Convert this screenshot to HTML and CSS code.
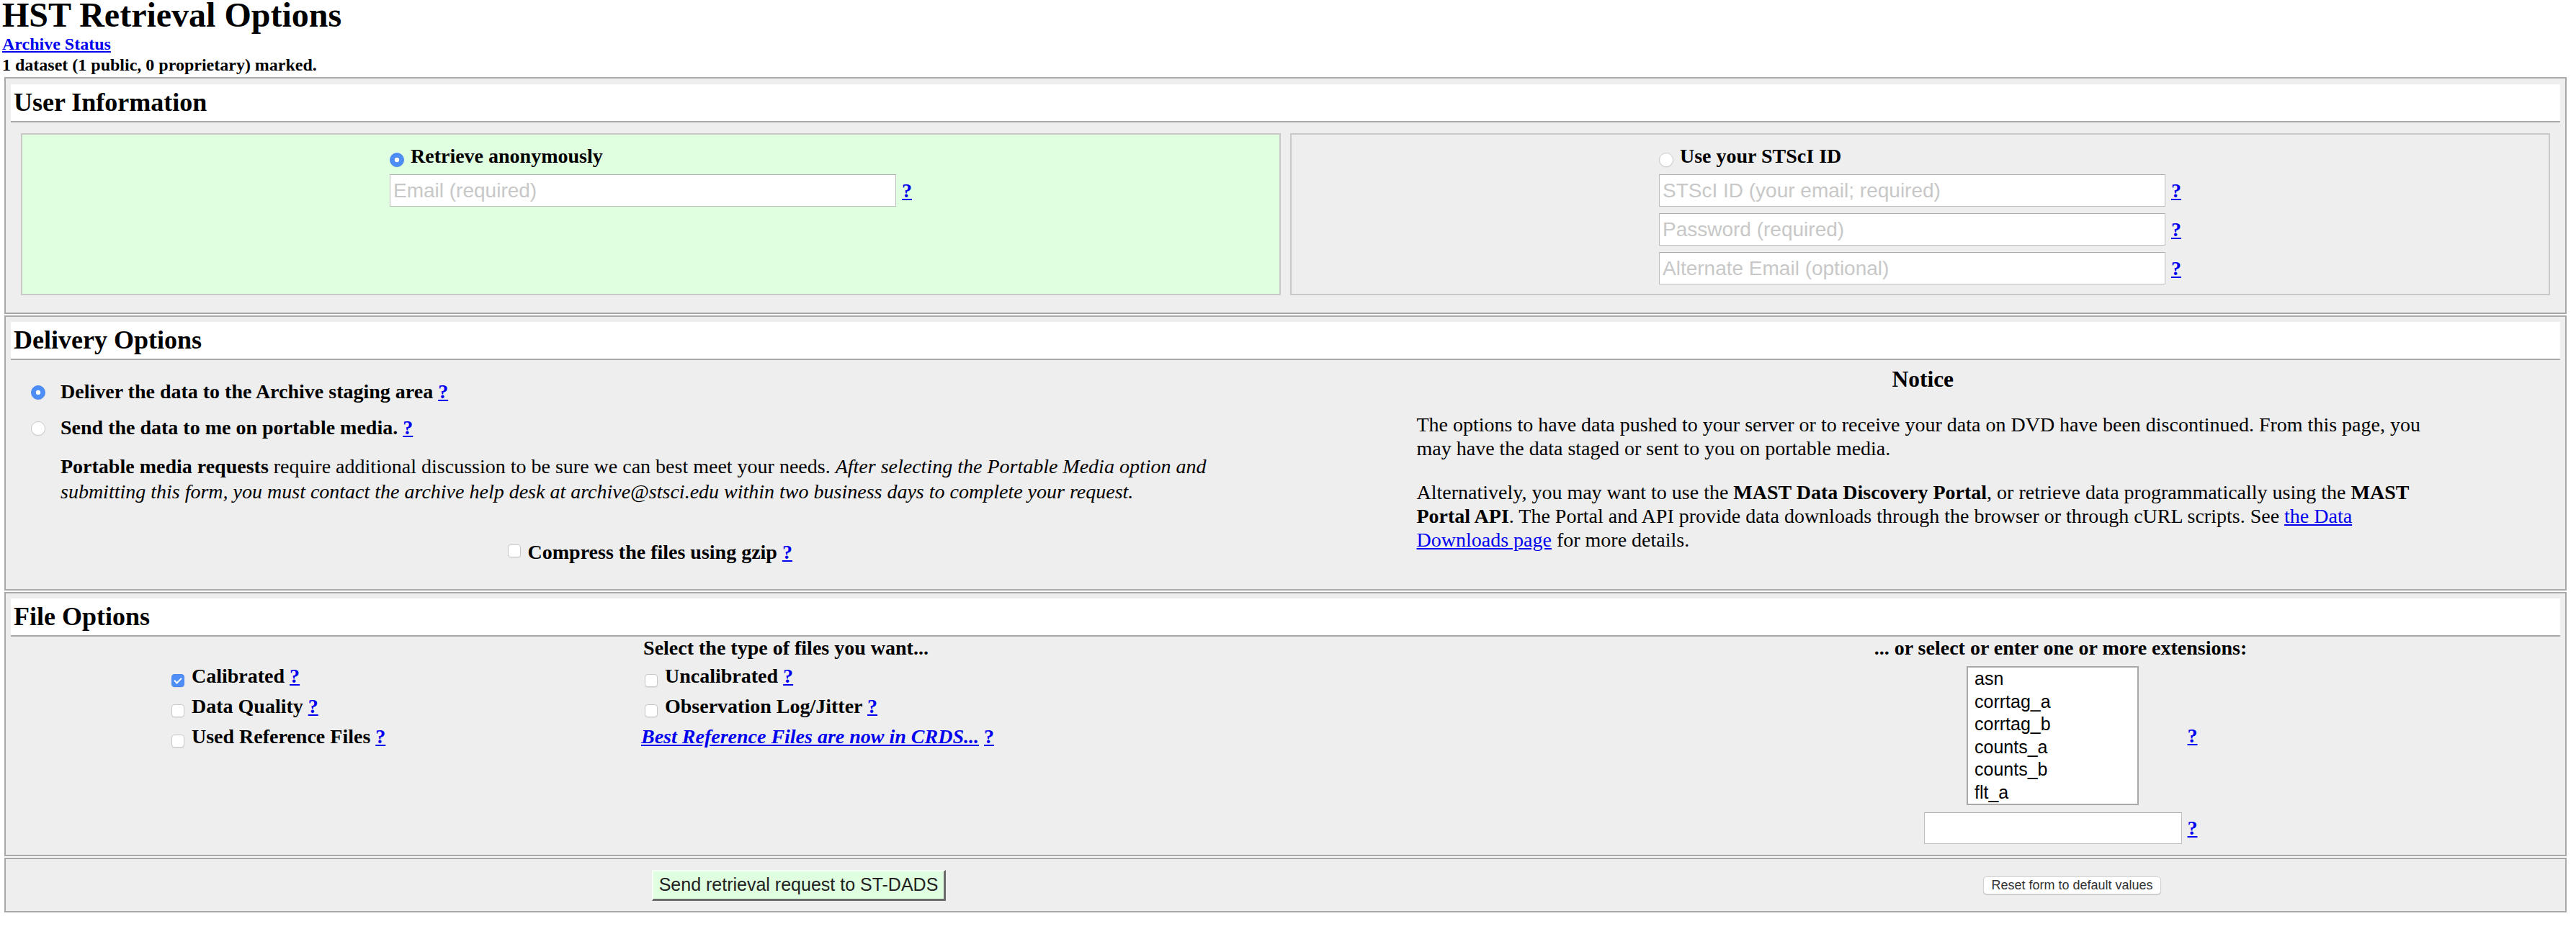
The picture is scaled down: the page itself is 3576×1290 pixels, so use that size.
FILE: index.html
```html
<!DOCTYPE html>
<html lang="en">
<head>
<meta charset="utf-8">
<title>HST Retrieval Options</title>
<link rel="stylesheet" href="styles.css">
</head>
<body>
<h1 class="title">HST Retrieval Options</h1>
<div class="status"><a href="#">Archive Status</a></div>
<div class="marked">1 dataset (1 public, 0 proprietary) marked.</div>
<form class="form">
  <section class="sect">
    <div class="sect-head"><h2>User Information</h2></div>
    <div class="panels">
      <div class="panel anon">
        <div class="ptable">
          <label class="plabel"><input type="radio" name="who" class="radio prad" checked>Retrieve anonymously</label>
          <input class="txt" type="text" placeholder="Email (required)"><a class="help" href="#">?</a>
        </div>
      </div>
      <div class="panel">
        <div class="ptable">
          <label class="plabel"><input type="radio" name="who" class="radio prad">Use your STScI ID</label>
          <input class="txt" type="text" placeholder="STScI ID (your email; required)"><a class="help" href="#">?</a>
          <input class="txt" type="password" placeholder="Password (required)"><a class="help" href="#">?</a>
          <input class="txt" type="text" placeholder="Alternate Email (optional)"><a class="help" href="#">?</a>
        </div>
      </div>
    </div>
  </section>

  <section class="sect">
    <div class="sect-head"><h2>Delivery Options</h2></div>
    <div class="deliv-body">
      <div class="deliv-left">
        <div class="opt"><input type="radio" name="media" class="radio drad" checked>Deliver the data to the Archive staging area <a class="help" href="#">?</a></div>
        <div class="opt"><input type="radio" name="media" class="radio drad">Send the data to me on portable media. <a class="help" href="#">?</a></div>
        <p class="portable"><b>Portable media requests</b> require additional discussion to be sure we can best meet your needs. <i>After selecting the Portable Media option and</i> <i>submitting this form, you must contact the archive help desk at archive@stsci.edu within two business days to complete your request.</i></p>
        <div class="compress"><input type="checkbox" class="check ccheck"><b>Compress the files using gzip</b> <a class="help" href="#">?</a></div>
      </div>
      <div class="notice">
        <h3>Notice</h3>
        <p>The options to have data pushed to your server or to receive your data on DVD have been discontinued. From this page, you may have the data staged or sent to you on portable media.</p>
        <p>Alternatively, you may want to use the <b>MAST Data Discovery Portal</b>, or retrieve data programmatically using the <b>MAST</b> <b>Portal API</b>. The Portal and API provide data downloads through the browser or through cURL scripts. See <a href="#">the Data</a> <a href="#">Downloads page</a> for more details.</p>
      </div>
    </div>
  </section>

  <section class="sect">
    <div class="sect-head"><h2>File Options</h2></div>
    <div class="files-body">
      <div class="fh">Select the type of files you want...</div>
      <div class="fh">... or select or enter one or more extensions:</div>
      <div class="types">
        <div class="tcol">
          <div class="crow"><input type="checkbox" class="check" checked>Calibrated <a class="help" href="#">?</a></div>
          <div class="crow"><input type="checkbox" class="check">Data Quality <a class="help" href="#">?</a></div>
          <div class="crow"><input type="checkbox" class="check">Used Reference Files <a class="help" href="#">?</a></div>
        </div>
        <div class="tcol">
          <div class="crow"><input type="checkbox" class="check">Uncalibrated <a class="help" href="#">?</a></div>
          <div class="crow"><input type="checkbox" class="check">Observation Log/Jitter <a class="help" href="#">?</a></div>
          <div class="crow"><a class="bestref" href="#">Best Reference Files are now in CRDS...</a> <a class="help" href="#">?</a></div>
        </div>
      </div>
      <div class="exts">
        <div class="ext-table">
          <div class="listbox">
            <div>asn</div>
            <div>corrtag_a</div>
            <div>corrtag_b</div>
            <div>counts_a</div>
            <div>counts_b</div>
            <div>flt_a</div>
          </div>
          <a class="help" href="#">?</a>
          <input class="txt ext-in" type="text">
          <a class="help" href="#">?</a>
        </div>
      </div>
    </div>
  </section>

  <section class="sect submit">
    <div class="submit-body">
      <div class="sc1"><button type="button" class="send">Send retrieval request to ST-DADS</button></div>
      <div class="sc2"><button type="reset" class="reset">Reset form to default values</button></div>
    </div>
  </section>
</form>
</body>
</html>
```

FILE: styles.css
```css
html, body {
  margin: 0;
  background: #fff;
}
body {
  padding-left: 3px;
  font-family: "Liberation Serif", "Times New Roman", serif;
  color: #000;
}
a {
  color: #0000ee;
  text-decoration: underline;
}
.title {
  margin: 0;
  font-size: 48px;
  line-height: 42px;
  font-weight: bold;
}
.status {
  margin-top: 5px;
  font-size: 24px;
  line-height: 29px;
  font-weight: bold;
}
.marked {
  font-size: 24px;
  line-height: 29px;
  font-weight: bold;
}
.form {
  margin: 0;
}
.sect {
  margin: 2px 13px 0 3px;
  border: 2px solid #a9a9a9;
  background: #eeeeee;
  padding: 7px;
}
.sect:first-child {
  padding-top: 8px;
}
.sect-head {
  background: #fff;
  border-bottom: 2px solid #a9a9a9;
  padding: 5px 4px;
}
.sect-head h2 {
  margin: 0;
  font-size: 36px;
  line-height: 41px;
  font-weight: bold;
}
.help {
  font-weight: bold;
  font-size: 28px;
  line-height: 32px;
}

/* radios & checkboxes */
.radio {
  -webkit-appearance: none;
  appearance: none;
  box-sizing: border-box;
  width: 20px;
  height: 20px;
  margin: 0;
  border-radius: 50%;
  border: 1px solid #cacaca;
  background: #fff;
  box-shadow: 0 1px 1px rgba(0, 0, 0, 0.06);
}
.radio:checked {
  border-color: #4a88ee;
  background: radial-gradient(circle, #fff 0, #fff 3px, #4d8df6 3.6px);
}
.prad {
  margin-right: 9px;
  vertical-align: -6px;
}
.drad {
  margin-right: 21px;
  vertical-align: -2px;
}
.check {
  -webkit-appearance: none;
  appearance: none;
  position: relative;
  box-sizing: border-box;
  width: 18px;
  height: 18px;
  margin: 0 10px 0 5px;
  border: 1px solid #c8c8c8;
  border-radius: 4px;
  background: #fff;
  vertical-align: -6px;
  box-shadow: 0 1px 1px rgba(0, 0, 0, 0.06);
}
.check:checked {
  background: #4f8ef7;
  border-color: #4a88ee;
}
.check:checked::after {
  content: "";
  position: absolute;
  left: 5px;
  top: 2px;
  width: 4px;
  height: 8px;
  border: solid #fff;
  border-width: 0 2px 2px 0;
  transform: rotate(45deg);
}
.ccheck {
  vertical-align: 2px;
}

/* user information */
.panels {
  display: flex;
  gap: 13px;
  margin: 15px 14px 17px;
}
.panel {
  flex: 1 1 0;
  border: 2px solid #c9c9c9;
  background: #eeeeee;
  padding: 14px 0 13px;
  display: flex;
  justify-content: center;
  align-items: flex-start;
}
.panel.anon {
  background: #e0ffe0;
}
.ptable {
  display: grid;
  grid-template-columns: 703px auto;
  column-gap: 8px;
  row-gap: 9px;
  align-items: center;
}
.plabel {
  grid-column: 1 / span 2;
  font-size: 28px;
  line-height: 32px;
  font-weight: bold;
}
.txt {
  box-sizing: border-box;
  width: 703px;
  height: 45px;
  margin: 0;
  padding: 0 4px;
  border: 1px solid #bdbdbd;
  border-top-color: #adadad;
  background: #fff;
  font: 28px "Liberation Sans", Arial, sans-serif;
  color: #000;
}
.txt::placeholder {
  color: #c8c8c8;
}

/* delivery options */
.deliv-body {
  display: grid;
  grid-template-columns: 1fr 1fr;
}
.deliv-left {
  padding: 28px 0 28px 0;
}
.opt {
  padding-left: 28px;
  font-size: 28px;
  line-height: 32px;
  font-weight: bold;
}
.opt + .opt {
  margin-top: 18px;
}
.portable {
  margin: 20px 0 0 69px;
  width: 1656px;
  font-size: 28px;
  line-height: 35px;
}
.compress {
  margin-top: 51px;
  text-align: center;
  font-size: 28px;
  line-height: 32px;
}
.notice h3 {
  margin: 8px 0 0;
  text-align: center;
  font-size: 31.5px;
  line-height: 37px;
  font-weight: bold;
}
.notice p {
  margin: 28px 0 0 182px;
  width: 1423px;
  font-size: 28px;
  line-height: 33px;
}

/* file options */
.files-body {
  display: grid;
  grid-template-columns: 2152px 1fr;
  padding-bottom: 8px;
}
.fh {
  text-align: center;
  font-weight: bold;
  font-size: 28px;
  line-height: 32px;
}
.types {
  display: grid;
  grid-template-columns: 657px auto;
  align-content: start;
  padding: 2px 0 0 218px;
}
.crow {
  font-size: 28px;
  line-height: 42px;
  font-weight: bold;
  white-space: nowrap;
}
.bestref {
  font-style: italic;
  font-weight: bold;
}
.exts {
  display: flex;
  justify-content: center;
  padding-top: 9px;
}
.ext-table {
  display: grid;
  grid-template-columns: 358px auto;
  column-gap: 8px;
  row-gap: 10px;
  align-items: center;
}
.listbox {
  justify-self: center;
  box-sizing: border-box;
  width: 239px;
  height: 193px;
  border: 2px solid #a9a9a9;
  background: #fff;
  padding: 0 0 0 9px;
  font: 25px/31.5px "Liberation Sans", Arial, sans-serif;
  color: #000;
  overflow: hidden;
}
.ext-in {
  width: 358px;
  height: 44px;
}

/* submit */
.sect.submit {
  padding: 0 7px;
}
.submit-body {
  display: grid;
  grid-template-columns: 2152px 1fr;
  height: 72px;
  align-items: center;
}
.sc1 {
  display: flex;
  justify-content: center;
  padding-left: 36px;
}
.sc2 {
  display: flex;
  justify-content: center;
  padding-left: 32px;
}
.send {
  box-sizing: border-box;
  height: 43px;
  margin: 0;
  padding: 0 8px;
  font: 25px "Liberation Sans", Arial, sans-serif;
  color: #222;
  background: #e0ffe0;
  border: 2px solid;
  border-color: #f6fff6 #6b6b6b #6b6b6b #f6fff6;
  border-width: 2px 3px 3px 2px;
  border-radius: 0;
}
.reset {
  box-sizing: border-box;
  height: 25px;
  margin: 0;
  padding: 0 10px;
  font: 18px "Liberation Sans", Arial, sans-serif;
  color: #333;
  background: #fff;
  border: 1px solid #cfcfcf;
  border-radius: 5px;
  box-shadow: 0 1px 1px rgba(0, 0, 0, 0.15);
}
```
